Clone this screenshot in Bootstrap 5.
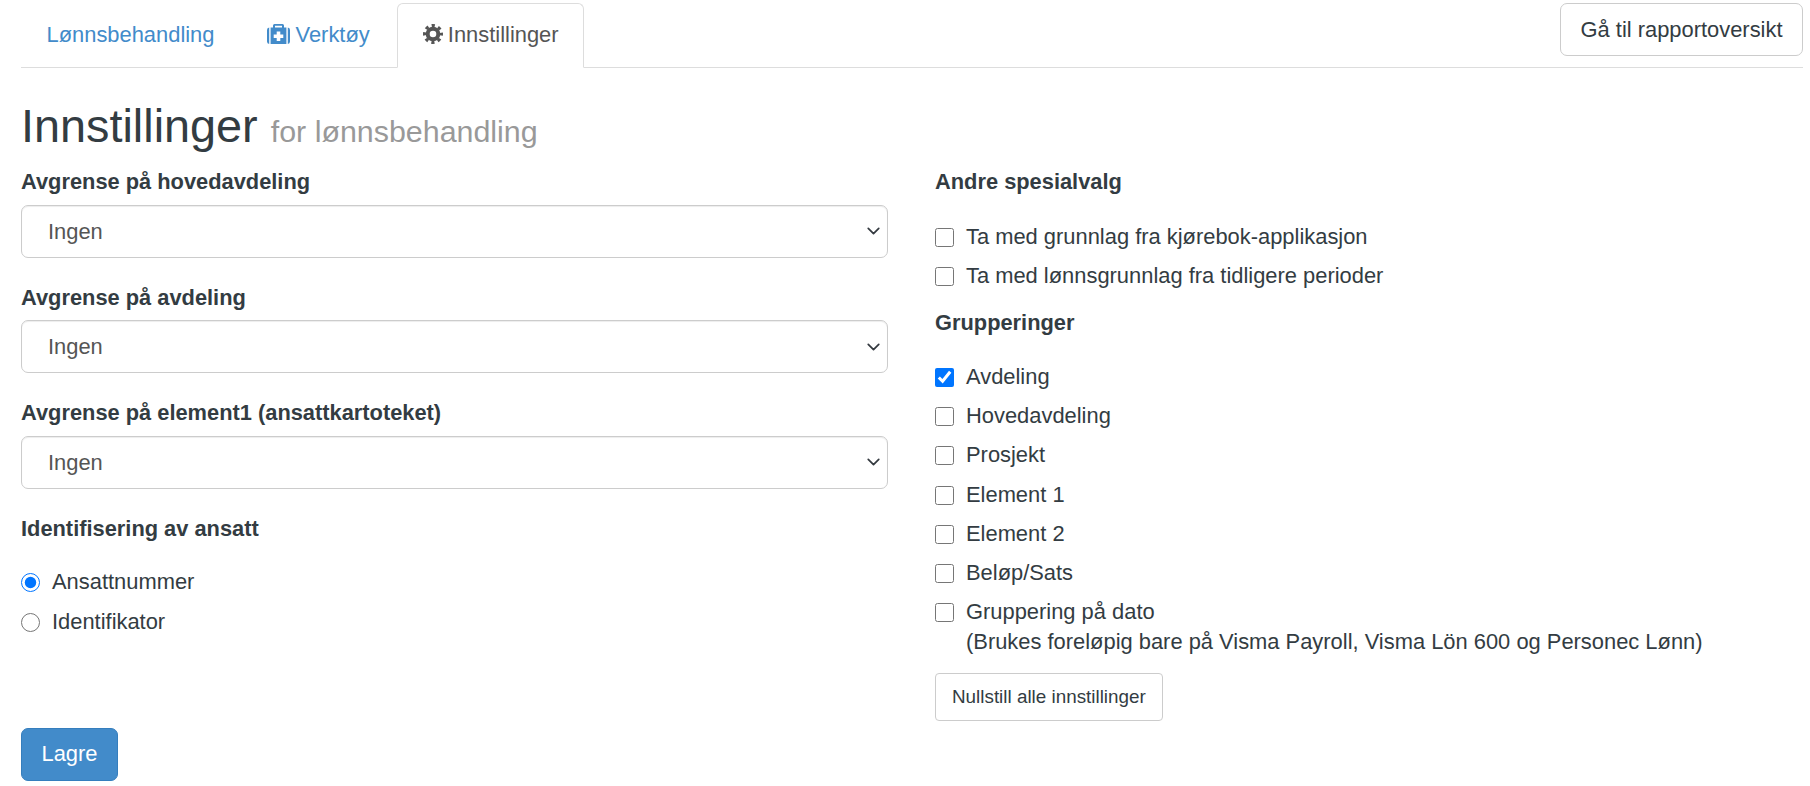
<!DOCTYPE html>
<html lang="no"><head><meta charset="utf-8">
<link href="https://cdn.jsdelivr.net/npm/bootstrap@5.3.0/dist/css/bootstrap.min.css" rel="stylesheet">
<style>
body{font-family:"Liberation Sans",Arial,sans-serif;font-size:21.9px;color:#333c42;background:#fff;line-height:1.5}
.page-wrap{padding:3px 7px 0 21px}
.top-tabs{border-bottom:1.5px solid #ddd;height:65px;flex-wrap:nowrap;position:relative}
.top-tabs .nav-link{font-size:21.9px;padding:0 24.500px;height:65px;line-height:62px;color:#428bca;border:1.5px solid transparent;border-radius:6px 6px 0 0;margin:0 2px 0 0}
.top-tabs .nav-link.active{color:#555;border-color:#ddd #ddd #fff;background:#fff}
.top-tabs .nav-item{margin-bottom:-1.5px}
.tab-ico{height:20px;vertical-align:-2px;fill:currentColor;margin-right:-1px}
.ico-kit{width:23px}
.ico-cog{width:20px}
.report-btn{position:absolute;right:0;top:0;height:53px;width:243px;font-size:21.9px;color:#333c42;border:1.5px solid #ccc;border-radius:7px;background:#fff;padding:1px 0 0}
.page-title{font-size:46.8px;font-weight:400;margin:33px 0 14px;line-height:1.1;color:#333c42}
.page-title span{font-size:30.4px;color:#999}
.main-row{--bs-gutter-x:48px}
.right-pane{padding-left:23px}
.field-head{font-weight:700;font-size:21.84px;display:block;margin-bottom:5.700px}
.group-head{margin-bottom:18px}
.first-group{margin-bottom:18.500px}
.group-next{margin-top:11px}
.field-sel{font-size:21.9px;height:53px;padding:2px 26px 0;color:#555;border:1.5px solid #ccc;border-radius:7px;margin-bottom:23.900px;box-shadow:inset 0 1px 1px rgba(0,0,0,.075);background-size:19px 14px;background-position:right 4.500px center}
.opt-line{display:flex;align-items:center;gap:12px;height:39.2px;margin:0;padding:0}
.opt-line .form-check-input{width:19px;height:19px;margin:0;flex:none;appearance:auto;-webkit-appearance:auto;background:none;border:0;box-shadow:none;accent-color:#0075ff}
.opt-note{margin:-6px 0 14px 31px}
.reset-btn{font-size:18.850px;color:#333c42;border:1.5px solid #ccc;border-radius:4px;background:#fff;height:48px;padding:0 16px}
.save-btn{font-size:21.9px;background:#428bca;border:1.5px solid #357ebd;color:#fff;border-radius:7px;height:53px;width:97px;padding:0;margin-top:7px}
</style></head><body>
<div class="page-wrap">
<ul class="nav nav-tabs top-tabs">
<li class="nav-item"><a class="nav-link" href="#">Lønnsbehandling</a></li>
<li class="nav-item"><a class="nav-link" href="#"><svg class="tab-ico ico-kit" viewBox="0 0 23 20"><path fill-rule="evenodd" d="M0 6a2.500 2.500 0 0 1 2.200-2.500V20A2.500 2.500 0 0 1 0 17.500zM3.600 3.500H6V1.500A1.500 1.500 0 0 1 7.500 0h8A1.500 1.500 0 0 1 17 1.500v2h2.400V20H3.600zM8 3.500h7V1.800H8zM9.700 7.500v3H6.700v3.500h3v3h3.600v-3h3v-3.500h-3v-3zM20.800 3.500A2.500 2.500 0 0 1 23 6v11.500a2.500 2.500 0 0 1-2.200 2.500z"/></svg> Verktøy</a></li>
<li class="nav-item"><a class="nav-link active" href="#"><svg class="tab-ico ico-cog" viewBox="0 0 20 20"><circle cx="10" cy="10" r="5.300" fill="none" stroke="currentColor" stroke-width="4"/><circle cx="10" cy="10" r="8.400" fill="none" stroke="currentColor" stroke-width="3.200" stroke-dasharray="3.200 3.397" stroke-dashoffset="1.600"/></svg> Innstillinger</a></li>
<li class="ms-auto"><button class="btn report-btn" type="button">Gå til rapportoversikt</button></li>
</ul>
<h1 class="page-title">Innstillinger <span>for lønnsbehandling</span></h1>
<div class="row main-row">
<div class="col-6">
<label class="field-head">Avgrense på hovedavdeling</label>
<select class="form-select field-sel"><option>Ingen</option></select>
<label class="field-head">Avgrense på avdeling</label>
<select class="form-select field-sel"><option>Ingen</option></select>
<label class="field-head">Avgrense på element1 (ansattkartoteket)</label>
<select class="form-select field-sel"><option>Ingen</option></select>
<label class="field-head group-head">Identifisering av ansatt</label>
<label class="opt-line"><input class="form-check-input" type="radio" name="idn" checked>Ansattnummer</label>
<label class="opt-line"><input class="form-check-input" type="radio" name="idn">Identifikator</label>
</div>
<div class="col-6 right-pane">
<label class="field-head first-group">Andre spesialvalg</label>
<label class="opt-line"><input class="form-check-input" type="checkbox">Ta med grunnlag fra kjørebok-applikasjon</label>
<label class="opt-line"><input class="form-check-input" type="checkbox">Ta med lønnsgrunnlag fra tidligere perioder</label>
<label class="field-head group-head group-next">Grupperinger</label>
<label class="opt-line"><input class="form-check-input" type="checkbox" checked>Avdeling</label>
<label class="opt-line"><input class="form-check-input" type="checkbox">Hovedavdeling</label>
<label class="opt-line"><input class="form-check-input" type="checkbox">Prosjekt</label>
<label class="opt-line"><input class="form-check-input" type="checkbox">Element 1</label>
<label class="opt-line"><input class="form-check-input" type="checkbox">Element 2</label>
<label class="opt-line"><input class="form-check-input" type="checkbox">Beløp/Sats</label>
<label class="opt-line"><input class="form-check-input" type="checkbox">Gruppering på dato</label>
<div class="opt-note">(Brukes foreløpig bare på Visma Payroll, Visma Lön 600 og Personec Lønn)</div>
<button class="btn reset-btn" type="button">Nullstill alle innstillinger</button>
</div>
</div>
<button class="btn save-btn" type="button">Lagre</button>
</div>
</body></html>
